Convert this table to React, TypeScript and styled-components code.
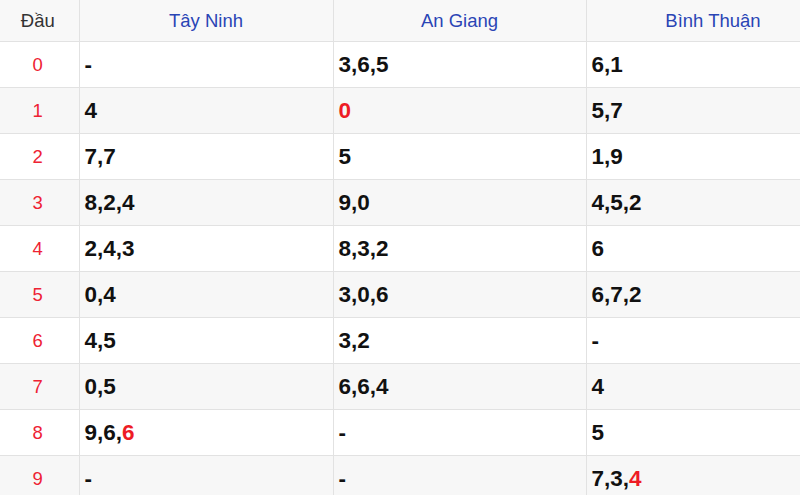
import React from "react";
import styled, { createGlobalStyle } from "styled-components";

const GlobalStyle = createGlobalStyle`
    html, body {
        margin: 0;
        padding: 0;
        background: #ffffff;
        overflow: hidden;
    }
`;

const Wrapper = styled.div`
    width: 800px;
    height: 495px;
    overflow: hidden;
    font-family: "Liberation Sans", Arial, sans-serif;
`;

const Table = styled.table`
    width: 840px;
    table-layout: fixed;
    border-collapse: collapse;
`;

const HeadCell = styled.th<{ $first?: boolean }>`
    height: 41px;
    padding: ${(props) => (props.$first ? "0 3px 0 0" : "0")};
    background-color: #f8f8f8;
    border: 1px solid #e2e2e2;
    border-top: none;
    border-left: none;
    font-size: 18.5px;
    font-weight: normal;
    text-align: center;
    color: ${(props) => (props.$first ? "#333333" : "#2a45b5")};
`;

const Row = styled.tr<{ $odd: boolean }>`
    background-color: ${(props) => (props.$odd ? "#f7f7f7" : "#ffffff")};
`;

const HeadCol = styled.td`
    height: 45px;
    padding: 0 3px 0 0;
    border-right: 1px solid #e2e2e2;
    border-bottom: 1px solid #e2e2e2;
    text-align: center;
    font-size: 18.5px;
    color: #ee2233;
`;

const ValueCell = styled.td`
    height: 45px;
    padding: 0 0 0 5px;
    border-right: 1px solid #e2e2e2;
    border-bottom: 1px solid #e2e2e2;
    font-size: 22.5px;
    font-weight: bold;
    color: #111111;
`;

const Hot = styled.span`
    color: #ee1c25;
`;

type Value = { digits: string[]; hot?: number };

const provinces = ["Tây Ninh", "An Giang", "Bình Thuận"];

// each value: list of digits, index of the red one (if any)
const rows: Value[][] = [
    [{ digits: ["-"] }, { digits: ["3", "6", "5"] }, { digits: ["6", "1"] }],
    [{ digits: ["4"] }, { digits: ["0"], hot: 0 }, { digits: ["5", "7"] }],
    [{ digits: ["7", "7"] }, { digits: ["5"] }, { digits: ["1", "9"] }],
    [{ digits: ["8", "2", "4"] }, { digits: ["9", "0"] }, { digits: ["4", "5", "2"] }],
    [{ digits: ["2", "4", "3"] }, { digits: ["8", "3", "2"] }, { digits: ["6"] }],
    [{ digits: ["0", "4"] }, { digits: ["3", "0", "6"] }, { digits: ["6", "7", "2"] }],
    [{ digits: ["4", "5"] }, { digits: ["3", "2"] }, { digits: ["-"] }],
    [{ digits: ["0", "5"] }, { digits: ["6", "6", "4"] }, { digits: ["4"] }],
    [{ digits: ["9", "6", "6"], hot: 2 }, { digits: ["-"] }, { digits: ["5"] }],
    [{ digits: ["-"] }, { digits: ["-"] }, { digits: ["7", "3", "4"], hot: 2 }],
];

const renderValue = (value: Value) =>
    value.digits.map((d, i) => (
      <React.Fragment key={i}>
        {i > 0 && ","}
        {value.hot === i ? <Hot>{d}</Hot> : d}
      </React.Fragment>
    ));

const App: React.FC = () => (
  <Wrapper>
    <GlobalStyle />
    <Table>
      <colgroup>
        <col style={{ width: 79 }} />
        <col style={{ width: 254 }} />
        <col style={{ width: 253 }} />
        <col style={{ width: 254 }} />
      </colgroup>
      <thead>
        <tr>
          <HeadCell $first>Đầu</HeadCell>
          {provinces.map((p) => (
            <HeadCell key={p}>{p}</HeadCell>
          ))}
        </tr>
      </thead>
      <tbody>
        {rows.map((row, i) => (
          <Row key={i} $odd={i % 2 === 1}>
            <HeadCol>{i}</HeadCol>
            {row.map((value, j) => (
              <ValueCell key={j}>{renderValue(value)}</ValueCell>
            ))}
          </Row>
        ))}
      </tbody>
    </Table>
  </Wrapper>
);

export default App;
